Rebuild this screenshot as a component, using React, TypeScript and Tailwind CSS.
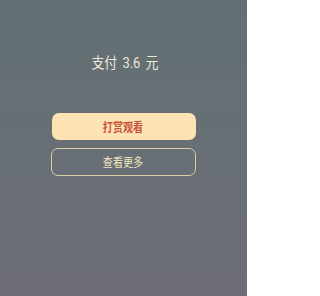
export default function App() {
  return (
    <div
      className="flex h-[296px] w-[247px] flex-col items-center bg-gradient-to-b from-[#627074] to-[#6d6d76] pt-[52px]"
      style={{ fontFamily: '"Noto Sans CJK SC", "Liberation Sans", sans-serif' }}
    >
      <p className="ml-[3px] scale-x-[0.86] text-[15px] leading-[20px] text-[#efe9d6]">
        支付
        <span className="mx-[6px]" style={{ fontFamily: "Roboto, sans-serif" }}>
          3.6
        </span>
        元
      </p>
      <button className="mt-[40px] flex h-[27px] w-[144px] items-center justify-center rounded-[7px] bg-[#fde3b2] text-[12px] font-semibold text-[#c8513e]">
        <span className="scale-x-[0.84]">打赏观看</span>
      </button>
      <button className="mt-[8px] flex h-[28px] w-[145px] items-center justify-center rounded-[7px] border border-[#d8cfa6] text-[12px] text-[#f1e6bf]">
        <span className="scale-x-[0.84]">查看更多</span>
      </button>
    </div>
  );
}
